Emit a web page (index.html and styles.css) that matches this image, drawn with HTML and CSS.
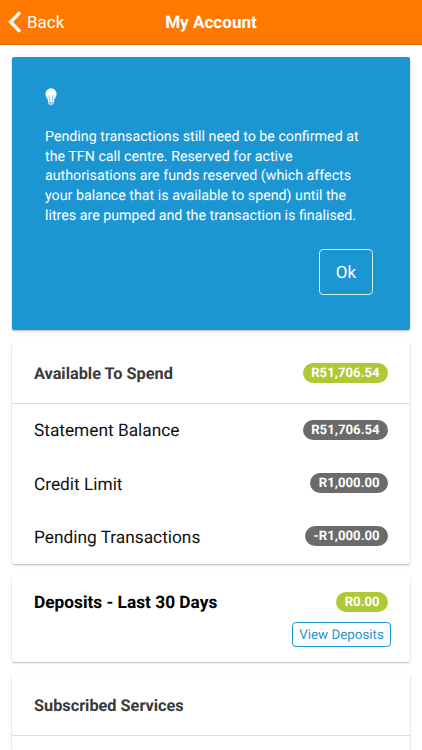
FILE: index.html
```html
<!DOCTYPE html>
<html lang="en">
<head>
  <meta charset="UTF-8">
  <meta name="viewport" content="width=device-width, initial-scale=1.0">
  <title>My Account</title>
  <link rel="stylesheet" href="styles.css">
</head>
<body>
  <header class="bar">
    <a class="back">
      <svg class="back-icon" viewBox="0 0 14 22" width="14" height="22"><path d="M12 1.400 2.600 11l9.400 9.600" fill="none" stroke="#fff" stroke-width="3.400"/></svg>
      <span class="label">Back</span>
    </a>
    <h1 class="title label">My Account</h1>
  </header>

  <main class="content">
    <section class="card notice">
      <svg class="bulb" viewBox="0 0 12 18" width="12" height="18">
        <path d="M6 .3a5.600 5.600 0 0 1 5.600 5.600c0 2.400-1.600 3.600-2.300 5.500L8.700 15.500 7.500 17h-3l-1.200-1.500-.6-4.100C2 9.500.4 8.300.4 5.900A5.600 5.600 0 0 1 6 .3z" fill="#fff"/>
        <path d="M3.800 7.500 5 13.500M8.200 7.500 7 13.500" fill="none" stroke="#1c96d3" stroke-width=".6"/>
        <path d="M3.200 14h5.600l-.4 2-1 1.200H4.600l-1-1.200z" fill="#8fcbe9"/>
      </svg>
      <p class="notice-text">Pending transactions still need to be confirmed at the TFN call centre. Reserved for active authorisations are funds reserved (which affects your balance that is available to spend) until the litres are pumped and the transaction is finalised.</p>
      <button class="ok-button">Ok</button>
    </section>

    <section class="card balances">
      <div class="row divider">
        <h2 class="heading">Available To Spend</h2>
        <span class="badge green">R51,706.54</span>
      </div>
      <div class="row item">
        <span class="label">Statement Balance</span>
        <span class="badge">R51,706.54</span>
      </div>
      <div class="row item">
        <span class="label">Credit Limit</span>
        <span class="badge">R1,000.00</span>
      </div>
      <div class="row item">
        <span class="label">Pending Transactions</span>
        <span class="badge">-R1,000.00</span>
      </div>
    </section>

    <section class="card deposits">
      <div class="row deposit-row">
        <h2 class="deposit-heading label">Deposits - Last 30 Days</h2>
        <span class="badge green">R0.00</span>
      </div>
      <button class="view-button">View Deposits</button>
    </section>

    <section class="card services">
      <div class="row divider">
        <h2 class="heading">Subscribed Services</h2>
      </div>
    </section>
  </main>
</body>
</html>
```
FILE: styles.css
```css
:root {
  --orange: #ff7901;
  --blue: #1c96d3;
  --green: #b0c736;
  --grey: #6b6b6b;
}

* {
  box-sizing: border-box;
}

body {
  margin: 0;
  background-color: #fff;
  color: #111;
  font-family: Roboto, sans-serif;
  text-rendering: geometricPrecision;
}

h1,
h2,
p {
  margin: 0;
}

button {
  font-family: inherit;
  text-rendering: inherit;
  background: none;
  cursor: pointer;
}

.label {
  padding-top: 2px;
}

.bar {
  display: grid;
  grid-template-columns: 1fr auto 1fr;
  align-items: center;
  height: 45px;
  padding-left: 8px;
  padding-right: 8px;
  background-color: var(--orange);
  border-bottom: 1px solid #d96c10;
  color: #fff;
}

.back {
  display: flex;
  align-items: center;
  gap: 5px;
  font-size: 17px;
}

.title {
  font-size: 17.1px;
  font-weight: bold;
}

.content {
  display: flex;
  flex-direction: column;
  gap: 12px;
  padding: 12px 12.4px 0;
}

.card {
  background-color: #fff;
  border-radius: 2px;
  box-shadow: 0 1px 2px rgba(0, 0, 0, 0.3);
}

.notice {
  display: flex;
  flex-direction: column;
  height: 273px;
  padding: 31px 36.6px 0 32.6px;
  background-color: var(--blue);
  color: #fff;
}

.notice-text {
  margin-top: 21.6px;
  font-size: 14.25px;
  line-height: 19.9px;
}

.ok-button {
  align-self: flex-end;
  width: 54px;
  height: 46px;
  margin-top: 21.9px;
  padding-top: 3px;
  border: 1px solid #d5edf8;
  border-radius: 4px;
  color: #fff;
  font-size: 17px;
}

.row {
  display: flex;
  align-items: center;
  justify-content: space-between;
  height: 53.4px;
  padding: 0 21.6px;
  font-size: 17.3px;
}

.divider {
  height: 62px;
  padding-top: 1px;
  border-bottom: 1px solid #dedede;
}

.item .label {
  padding-top: 1px;
}

.item .badge {
  margin-bottom: 2px;
}

.balances {
  height: 222px;
}

.heading {
  color: #393939;
  font-size: 16.3px;
  font-weight: bold;
}

.badge {
  height: 20px;
  padding: 0 8.4px;
  border-radius: 10px;
  background-color: var(--grey);
  color: #fff;
  font-size: 13.2px;
  font-weight: bold;
  line-height: 21.5px;
}

.green {
  background-color: var(--green);
}

.deposits {
  display: flex;
  flex-direction: column;
  height: 86px;
  padding-top: 16px;
}

.deposit-row {
  height: 20px;
}

.deposit-heading {
  color: #000;
  font-size: 17.3px;
  font-weight: bold;
}

.view-button {
  align-self: flex-end;
  width: 99px;
  height: 25px;
  margin: 10px 18.6px 0 0;
  padding: 2px 0 0;
  border: 1px solid var(--blue);
  border-radius: 4px;
  color: var(--blue);
  font-size: 13.4px;
}

.services {
  height: 76px;
  border-bottom-left-radius: 0;
  border-bottom-right-radius: 0;
}
```
